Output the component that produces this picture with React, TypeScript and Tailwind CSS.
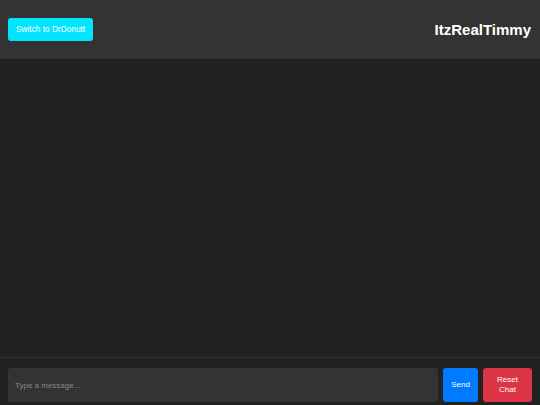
import React, { useState } from 'react';

export default function App() {
  const [text, setText] = useState('');

  return (
    <div className="flex h-[405px] flex-col bg-[#222222] font-['Liberation_Sans',Arial,sans-serif] text-white">
      {/* Header */}
      <div className="flex h-[60px] shrink-0 items-center justify-between border-b border-[#1c1c1c] bg-[#333333] px-2">
        <button className="rounded-[3px] bg-[#00e5ff] px-[8px] py-[6px] text-[8.3px] leading-[11px] text-white">
          Switch to DrDonutt
        </button>
        <h1 className="mr-[1px] text-[15px] font-bold leading-none">ItzRealTimmy</h1>
      </div>

      {/* Messages */}
      <div className="flex-1" />

      {/* Input bar */}
      <div className="flex shrink-0 items-stretch gap-[5px] border-t border-[#333333] px-2 pb-[3px] pt-[10px]">
        <input
          value={text}
          onChange={(e) => setText(e.target.value)}
          placeholder="Type a message..."
          className="h-[34px] min-w-0 flex-1 rounded-[3px] bg-[#333333] px-[7px] text-[8px] text-white outline-none placeholder:text-[#888888]"
        />
        <button className="w-[35px] rounded-[3px] bg-[#007bff] text-[8px] text-white">Send</button>
        <button className="w-[49px] rounded-[3px] bg-[#dc3545] px-[8px] text-[8px] leading-[10px] text-white">
          Reset Chat
        </button>
      </div>
    </div>
  );
}
